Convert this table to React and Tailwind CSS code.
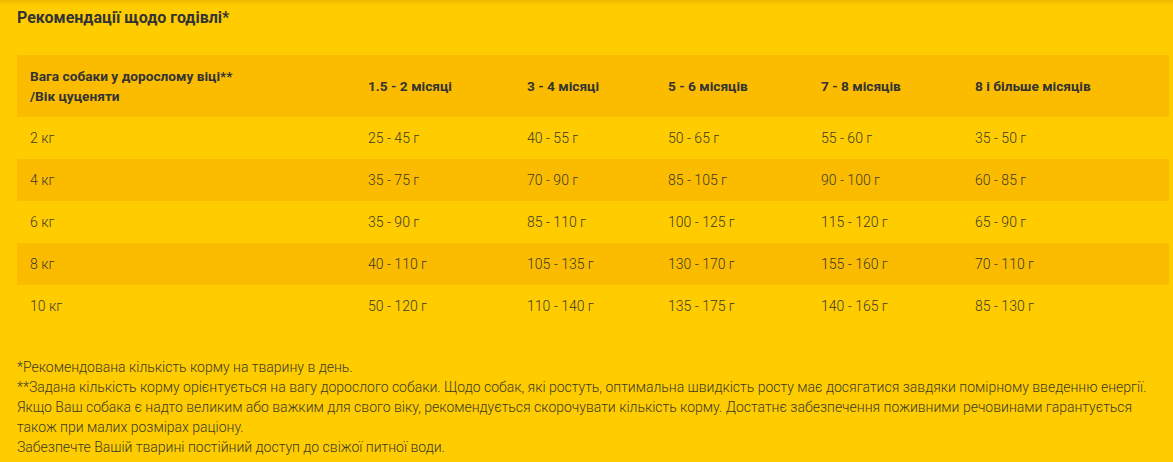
import React from "react";

const cols = ["1.5 - 2 місяці", "3 - 4 місяці", "5 - 6 місяців", "7 - 8 місяців", "8 і більше місяців"];

const rows = [
  ["2 кг", "25 - 45 г", "40 - 55 г", "50 - 65 г", "55 - 60 г", "35 - 50 г"],
  ["4 кг", "35 - 75 г", "70 - 90 г", "85 - 105 г", "90 - 100 г", "60 - 85 г"],
  ["6 кг", "35 - 90 г", "85 - 110 г", "100 - 125 г", "115 - 120 г", "65 - 90 г"],
  ["8 кг", "40 - 110 г", "105 - 135 г", "130 - 170 г", "155 - 160 г", "70 - 110 г"],
  ["10 кг", "50 - 120 г", "110 - 140 г", "135 - 175 г", "140 - 165 г", "85 - 130 г"],
];

const widths = ["w-[338px]", "w-[159px]", "w-[141px]", "w-[153px]", "w-[154px]", "w-[207px]"];

export default function App() {
  return (
    <div className="relative w-[1173px] h-[462px] overflow-hidden bg-[#ffcc00] text-[#333] font-['Roboto','Liberation_Sans',sans-serif]">
      <div className="absolute inset-x-0 top-0 h-[6px] bg-gradient-to-b from-[#f2b800] to-transparent" />
      <div className="pl-[17px] pr-[4px]">
        <h2 className="pt-[8px] text-[16px] leading-[19px] font-bold">Рекомендації щодо годівлі*</h2>

        <table className="mt-[28px] w-[1152px] table-fixed border-collapse">
          <thead>
            <tr className="bg-[#fbbc00] h-[62px]">
              <th className={`${widths[0]} pl-[13px] text-left align-middle text-[13.7px] leading-[20px] font-bold`}>
                Вага собаки у дорослому віці**
                <br />
                /Вік цуценяти
              </th>
              {cols.map((c, i) => (
                <th key={c} className={`${widths[i + 1]} pl-[13px] text-left align-middle text-[13.7px] font-bold`}>
                  {c}
                </th>
              ))}
            </tr>
          </thead>
          <tbody>
            {rows.map((r, ri) => (
              <tr key={r[0]} className={`h-[42px] ${ri % 2 === 1 ? "bg-[#fbbc00]" : ""}`}>
                {r.map((v, ci) => (
                  <td key={ci} className="pl-[13px] align-middle text-[14px] font-light text-[#3d3a2a]">
                    {v}
                  </td>
                ))}
              </tr>
            ))}
          </tbody>
        </table>

        <div className="mt-[30px] text-[14px] leading-[20px] font-light text-[#3d3a2a]">
          <p>*Рекомендована кількість корму на тварину в день.</p>
          <p>
            **Задана кількість корму орієнтується на вагу дорослого собаки. Щодо собак, які ростуть, оптимальна швидкість росту має досягатися завдяки помірному введенню енергії.
          </p>
          <p>
            Якщо Ваш собака є надто великим або важким для свого віку, рекомендується скорочувати кількість корму. Достатнє забезпечення поживними речовинами гарантується також при малих розмірах раціону.
          </p>
          <p>Забезпечте Вашій тварині постійний доступ до свіжої питної води.</p>
        </div>
      </div>
    </div>
  );
}
